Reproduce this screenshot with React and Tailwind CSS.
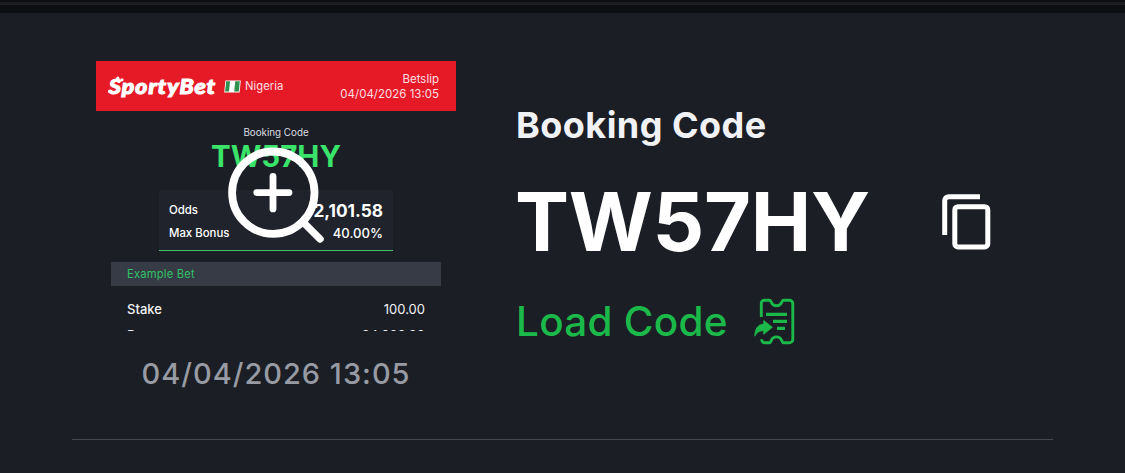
import React from "react"

const NigeriaFlag = () => (
    <svg width="17" height="13" viewBox="0 0 17 13" className="shrink-0">
        <path d="M1.4 0.4H16.8L15.6 12.4H0.2Z" fill="#ffffff" />
        <path d="M2.2 1.2H6L5 11.6H1.1Z" fill="#2f8f4e" />
        <path d="M11.2 1.2H15.8L14.9 11.6H10.2Z" fill="#2f8f4e" />
    </svg>
)

const ZoomIcon = () => (
    <svg width="100" height="100" viewBox="0 0 100 100" fill="none" stroke="#ffffff" strokeLinecap="round">
        <circle cx="47.3" cy="46.7" r="41.2" strokeWidth="7.8" />
        <path d="M77 76L94 93" strokeWidth="7.4" />
        <path d="M30.8 46.6H63M47 30.4V62.9" strokeWidth="6.8" />
    </svg>
)

const CopyIcon = () => (
    <svg width="50" height="58" viewBox="0 0 50 58" fill="none" stroke="#ffffff" strokeWidth="5">
        <path d="M2.7 41V6.7A4 4 0 0 1 6.7 2.7H38" />
        <rect x="12.8" y="12.7" width="33" height="40.2" rx="3.2" />
    </svg>
)

const LoadIcon = () => (
    <svg width="42" height="48" viewBox="0 0 42 48" fill="none" stroke="#1bb949" strokeWidth="2.9">
        <path
            d="M7.3 19V5.2A3 3 0 0 1 10.3 2.2H15.3C16.7 2.2 16.8 3.2 17.3 4.3A5.6 5.6 0 0 0 27.7 4.3C28.2 3.2 28.3 2.2 29.7 2.2H35.4A3.4 3.4 0 0 1 38.8 5.6V41.4A3.4 3.4 0 0 1 35.4 44.8H30C28.4 44.8 28.2 43.7 27.8 42.7A5.6 5.6 0 0 0 17.2 42.7C16.8 43.7 16.6 44.8 15 44.8H11.2C9 44.8 7.6 43.5 7.6 41.3"
            strokeLinejoin="round"
        />
        <path d="M12 16.3H33M19 23.3H33M23 30.4H31" strokeWidth="3.2" />
        <path
            d="M9.7 22.5L18.4 29.3L9.7 36.3V32.7C5 32.8 3.2 34.2 0.8 38.2C1 30.7 3.7 26.6 9.7 26Z"
            fill="#1bb949"
            stroke="#1bb949"
            strokeWidth="0.8"
            strokeLinejoin="round"
        />
    </svg>
)

const BetslipPreview = () => {
    return (
        <div className="relative h-[270px] w-[360px] overflow-hidden">
            {/* Brand header */}
            <div className="flex h-[50px] items-center bg-[#e61a27] pr-[17px] pl-3 text-[#fbdfe1]">
                <div className="relative w-[108px] text-white">
                    <span className="block origin-left scale-x-[1.12] pl-px font-[Lato] text-[20.5px] leading-[47px] font-black tracking-[0.9px] italic [-webkit-text-stroke:1.1px_white]">
                        SportyBet
                    </span>
                    <svg width="18" height="20" viewBox="0 0 18 20" className="absolute top-[13px] left-0" fill="#ffffff">
                        <circle cx="9.8" cy="2.2" r="1.6" />
                        <circle cx="14" cy="3.8" r="1.6" />
                        <circle cx="1.8" cy="15.2" r="1.8" />
                    </svg>
                </div>
                <div className="ml-2 flex items-center gap-1">
                    <NigeriaFlag />
                    <span className="pt-px text-[11.3px]">Nigeria</span>
                </div>
                <div className="ml-auto pt-px text-right text-[11.5px] leading-[14.5px]">
                    <p>Betslip</p>
                    <p>04/04/2026 13:05</p>
                </div>
            </div>

            {/* Code */}
            <p className="mt-[13px] text-center text-[9.8px] leading-[17px] text-[#dcdde0]">Booking Code</p>
            <p className="mt-px text-center text-[29.5px] leading-[29px] font-bold text-[#3ae36a]">TW57HY</p>

            {/* Odds */}
            <div className="mx-auto mt-[19px] flex h-[61px] w-[234px] flex-col border-b border-[#3fc16b] bg-[#20232c] px-[10px] pt-[9px] text-white">
                <div className="flex h-[23px] items-center justify-between">
                    <span className="text-[11.4px] font-medium">Odds</span>
                    <span className="text-[17.3px] leading-[22px] font-bold">2,101.58</span>
                </div>
                <div className="flex h-[23px] items-center justify-between">
                    <span className="text-[11.4px] font-medium">Max Bonus</span>
                    <span className="text-[13.1px] font-medium">40.00%</span>
                </div>
            </div>

            {/* Example */}
            <div className="mx-[15px] mt-[11px] flex h-6 items-center bg-[#373b46] px-4 text-[11.2px] tracking-[0.2px] text-[#2fc268]">
                Example Bet
            </div>
            <div className="mt-[12px] px-[31px] text-[13px] leading-[23px] text-[#f2f2f4]">
                <div className="flex justify-between">
                    <span className="font-medium">Stake</span>
                    <span>100.00</span>
                </div>
                <div className="mt-[3px] flex justify-between">
                    <span>Bonus</span>
                    <span>84,023.20</span>
                </div>
            </div>

            <div className="absolute top-[85px] left-[130px]">
                <ZoomIcon />
            </div>
        </div>
    )
}

const App = () => {
    return (
        <div className="h-[473px] overflow-hidden bg-[#1b1e25] font-[Inter,sans-serif]">
            {/* Strip above the card */}
            <div className="h-[13px] bg-[#0e0f13] pt-[2px]">
                <div className="h-[3px] bg-[#1d1e22]"></div>
            </div>

            <div className="mx-[72px] flex h-[427px] border-b border-[#464950] pt-12 pl-6">
                <div className="w-[360px] shrink-0">
                    <BetslipPreview />
                    <p className="mt-6 text-center text-[29px] leading-[38px] font-medium tracking-[1px] text-[#989ba4]">04/04/2026 13:05</p>
                </div>

                <div className="ml-[60px] flex grow flex-col pt-[40px]">
                    <h2 className="text-[36px] leading-[48px] font-bold tracking-[0.45px] text-[#f1f2f6]">Booking Code</h2>
                    <div className="mt-[49px] flex h-[48px] items-center">
                        <span className="-ml-px w-[427px] text-[81px] leading-[48px] font-bold tracking-[-0.3px] text-white">TW57HY</span>
                        <button type="button" aria-label="Copy code" className="mt-[2px]">
                            <CopyIcon />
                        </button>
                    </div>
                    <button type="button" className="mt-[52px] flex h-[48px] items-center text-[#1bb949]">
                        <span className="w-[238px] text-left text-[40.5px] leading-[48px] font-medium tracking-[0.25px]">Load Code</span>
                        <LoadIcon />
                    </button>
                </div>
            </div>
        </div>
    )
}

export default App
